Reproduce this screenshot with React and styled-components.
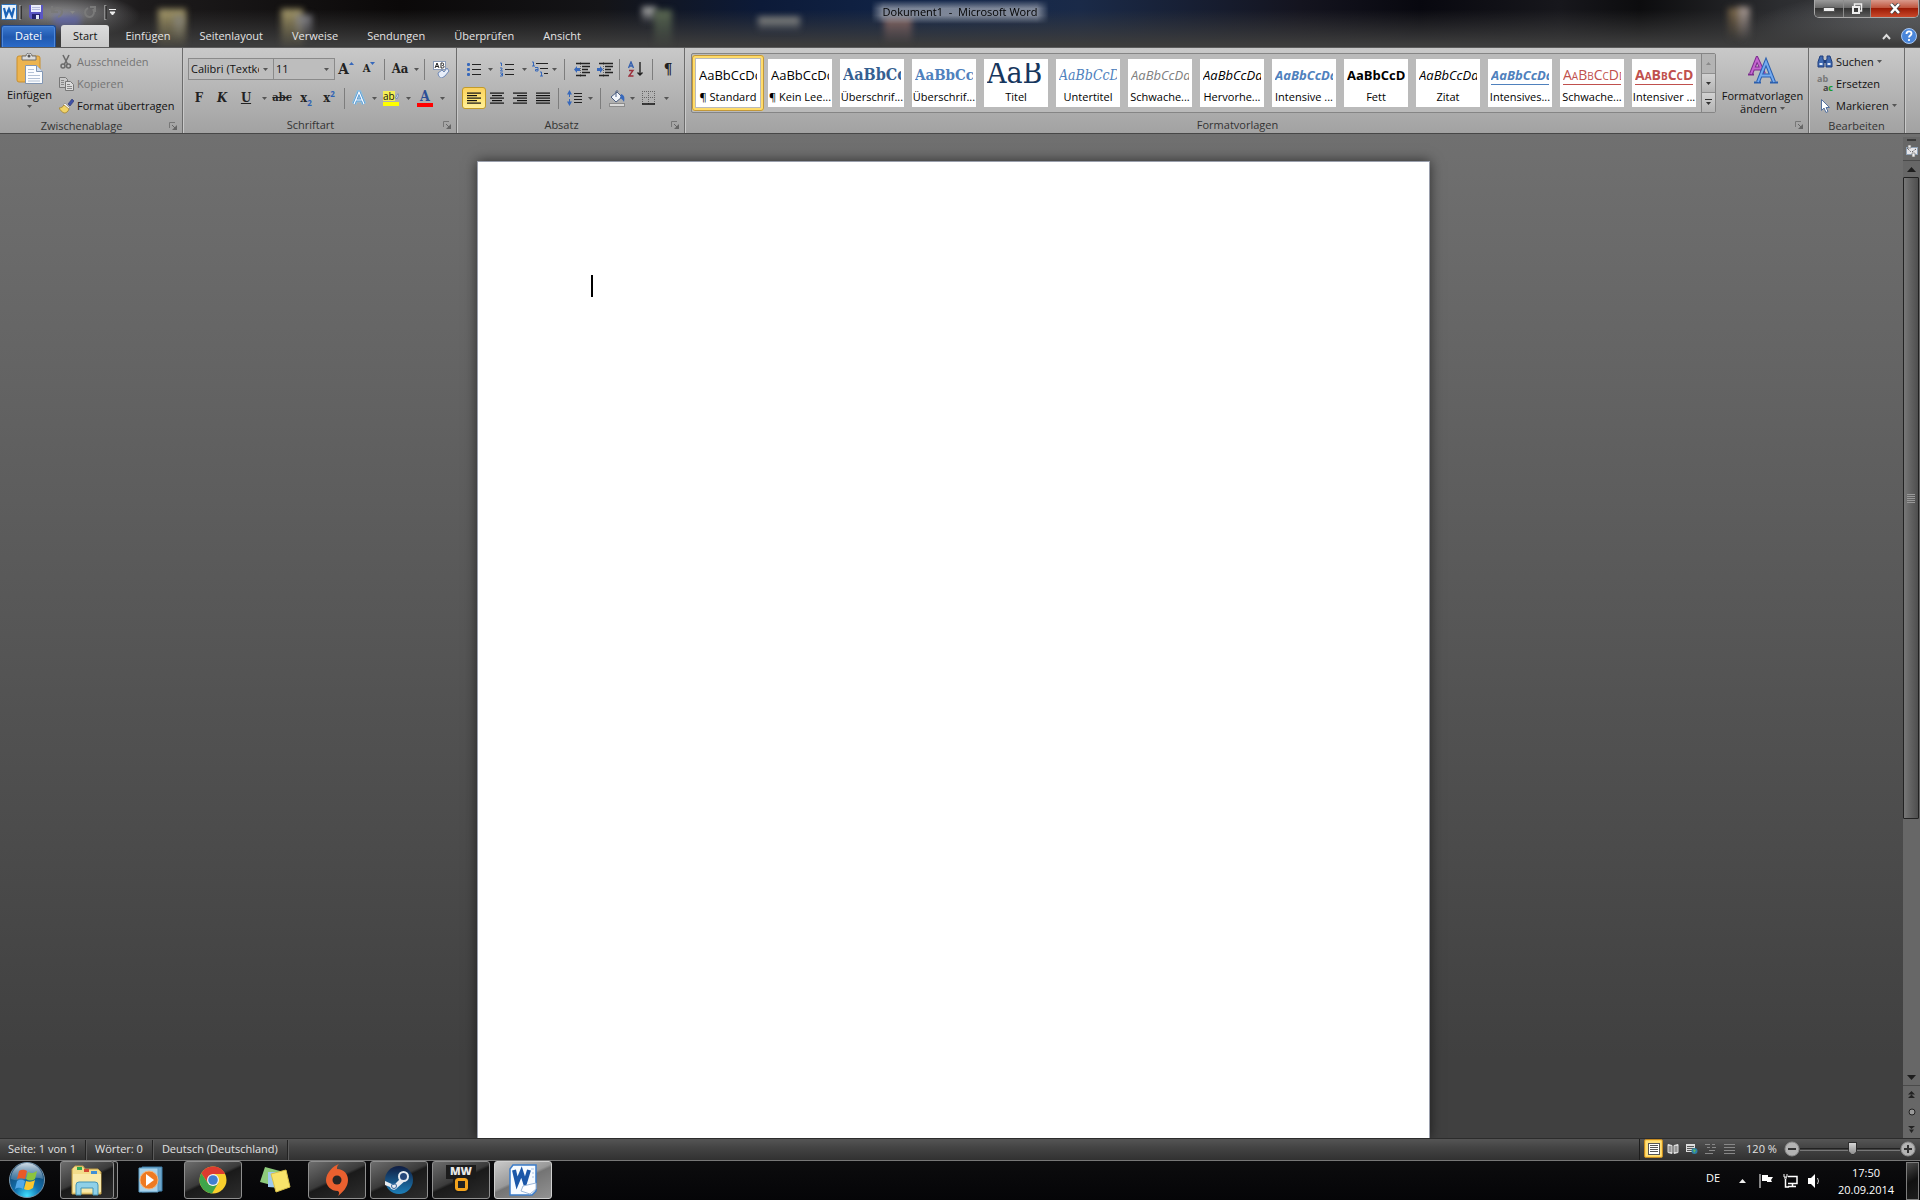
import React from "react";
import styled, { createGlobalStyle, css } from "styled-components";

const GlobalStyle = createGlobalStyle`
  * {
    box-sizing: border-box;
  }

  body {
    margin: 0;
    font-family: "Open Sans", "Noto Sans", sans-serif;
    font-size: 11px;
    line-height: 14px;
    color: #111;
    background: #404040;
  }

  button,
  select {
    font: inherit;
    color: inherit;
    margin: 0;
    padding: 0;
    border: none;
    background: none;
  }
`;

const Window = styled.div`
  display: flex;
  flex-direction: column;
  min-height: 100vh;
`;

/* ---------- title bar ---------- */

const Header = styled.header`
  position: relative;
  isolation: isolate;
  height: 48px;
  border-bottom: 1px solid #5c5c5c;
  overflow: hidden;
  background:
    linear-gradient(to bottom, rgba(60, 60, 60, 0) 20%, #3c3c3c 94%),
    radial-gradient(ellipse 80px 24px at 60px 16px, #98989a, transparent),
    radial-gradient(ellipse 160px 50px at 1900px 40px, #77797c, transparent),
    linear-gradient(
      to right,
      #4a4a4c 0,
      #1d1b1c 140px,
      #0b0909 400px,
      #141417 600px,
      #0c1a38 760px,
      #12264a 940px,
      #1a2a48 1080px,
      #14141f 1300px,
      #08080f 1420px,
      #17171c 1560px,
      #0c0c0e 1640px,
      #2c2d30 1780px,
      #3c3d40 100%
    );
`;

/* desktop icons showing through the glass */
const Ghost = styled.span`
  position: absolute;
  z-index: -1;
  top: ${(p) => p.$y}px;
  left: ${(p) => p.$x}px;
  width: ${(p) => p.$w}px;
  height: ${(p) => p.$h}px;
  background: linear-gradient(${(p) => p.$color}, transparent);
  filter: blur(3px);
`;

const TitleRow = styled.div`
  display: grid;
  grid-template-columns: 1fr auto 1fr;
  height: 25px;
`;

const QuickAccess = styled.div`
  display: flex;
  align-items: center;
  height: 24px;
  padding-left: 1px;
`;

const QuickButton = styled.button`
  display: flex;
  align-items: center;
  justify-content: center;
  width: ${(p) => p.$w}px;
  height: 20px;
`;

const QuickBar = styled.span`
  width: 3px;
  height: 15px;
  margin: 0 2px;
  border: 1px solid #8d8d8d;
  border-right-color: #333;
`;

const Title = styled.h1`
  height: 24px;
  margin: 0;
  padding: 5px 12px 0;
  font-size: 11px;
  font-weight: 400;
  line-height: 14px;
  white-space: pre;
  color: #000;
  background: linear-gradient(
    to right,
    rgba(160, 166, 178, 0),
    rgba(160, 166, 178, 0.75) 12px,
    rgba(160, 166, 178, 0.75) calc(100% - 12px),
    rgba(160, 166, 178, 0)
  );
  mask-image: linear-gradient(transparent, #000 35%, #000 65%, transparent);
`;

const WindowButtons = styled.div`
  display: flex;
  justify-self: end;
  height: 18px;
  margin-right: 1px;
  border: 1px solid #a9a9a9;
  border-top: none;
  border-radius: 0 0 5px 5px;
  overflow: hidden;
`;

const WindowButton = styled.button`
  display: flex;
  align-items: center;
  justify-content: center;
  width: ${(p) => p.$w}px;
  border-right: 1px solid #8c8c8c;
  background: linear-gradient(#9a9a9a, #6a6a6a 45%, #333 50%, #5c5c5c);

  ${(p) =>
    p.$close &&
    css`
      border-right: none;
      background: linear-gradient(#d99a8c, #c0563f 45%, #9c1c06 50%, #c9482a);
    `}
`;

const TabRow = styled.nav`
  display: flex;
  gap: 1px;
  height: 23px;
  padding-left: 1px;
  color: #e4e4e4;
`;

const FileTab = styled.button`
  width: 55px;
  margin-right: 4px;
  padding-bottom: 2px;
  color: #fff;
  border: 1px solid #1d4a93;
  border-bottom: none;
  border-radius: 3px 3px 0 0;
  background: linear-gradient(#3d7bd0, #2059b0 50%, #2b6ccb);
  box-shadow: inset 0 0 0 1px #4f88d8;
`;

const Tab = styled.button`
  padding: 0 14px 2px;
  white-space: nowrap;

  ${(p) =>
    p.$active &&
    css`
      margin-right: 1px;
      padding: 0 12px 2px;
      color: #111;
      border-radius: 3px 3px 0 0;
      background: linear-gradient(#dcdcdc, #c8c8c8);
    `}
`;

const TabTools = styled.div`
  display: flex;
  align-items: center;
  gap: 10px;
  margin-left: auto;
  padding: 0 3px 2px 0;
`;

/* ---------- ribbon ---------- */

const Ribbon = styled.div`
  display: flex;
  height: 86px;
  border-bottom: 1px solid #474747;
  background: linear-gradient(#c9c9c9, #b9b9b9 40%, #a2a2a2);
`;

const Group = styled.section`
  display: flex;
  flex-direction: column;
  flex: ${(p) => (p.$grow ? "1 1 0" : "none")};
  min-width: 0;
  width: ${(p) => (p.$w ? `${p.$w}px` : "auto")};
  border-right: 1px solid #c9c9c9;
  box-shadow: inset -1px 0 0 #6c6c6c;
`;

const GroupBody = styled.div`
  display: flex;
  flex: 1;
  min-width: 0;
  padding: ${(p) => p.$pad || "0"};
`;

const GroupFooter = styled.div`
  display: flex;
  align-items: center;
  height: 17px;
  padding-right: 6px;
  color: #333;
`;

const GroupLabel = styled.h2`
  flex: 1;
  margin: 0;
  padding: ${(p) => (p.$launcher ? "0 6px 0 0" : "0 0 0 4px")};
  font-size: 11px;
  font-weight: 400;
  text-align: center;
`;

const BigButton = styled.button`
  display: flex;
  flex-direction: column;
  align-items: center;
  width: ${(p) => p.$w}px;
  line-height: 13px;
`;

const BigIcon = styled.span`
  display: flex;
  align-items: center;
  height: 34px;
  margin-bottom: 2px;
`;

const Stack = styled.div`
  display: flex;
  flex-direction: column;
`;

const RowButton = styled.button`
  display: flex;
  align-items: center;
  gap: 3px;
  height: 22px;
  padding-bottom: 3px;
  white-space: nowrap;
  color: ${(p) => (p.disabled ? "#757575" : "#111")};
`;

const Tools = styled.div`
  display: flex;
  flex-direction: column;
  gap: 7px;
`;

const ToolRow = styled.div`
  display: flex;
  align-items: center;
  height: 22px;
`;

const Tool = styled.button`
  display: flex;
  align-items: center;
  justify-content: center;
  width: ${(p) => p.$w}px;
  height: 22px;

  ${(p) =>
    p.$active &&
    css`
      border: 1px solid #c29b29;
      border-radius: 3px;
      background: linear-gradient(#fcd25f, #ffe67a 60%, #fff09c);
    `}
`;

const Separator = styled.span`
  width: ${(p) => p.$w}px;
  height: 21px;
  background: linear-gradient(#7d7d7d, #7d7d7d) center / 1px 100% no-repeat;
`;

const Letter = styled.span`
  font-family: "DejaVu Serif Condensed", "Liberation Serif", serif;
  font-size: ${(p) => p.$size || 13}px;
  font-weight: 700;
  font-style: ${(p) => (p.$italic ? "italic" : "normal")};
  text-decoration: ${(p) => p.$line || "none"};
  color: #222;

  sub,
  sup {
    font-family: "Open Sans", sans-serif;
    font-size: 8px;
    line-height: 0;
    color: #2f62b5;
  }
`;

const Combo = styled.label`
  display: flex;
  align-items: center;
  width: ${(p) => p.$w}px;
  height: 22px;
  margin-right: -1px;
  padding: 0 5px 0 2px;
  border: 1px solid #8a8a8a;
  background: #bdbdbd;

  select {
    flex: 1;
    min-width: 0;
    margin-right: 4px;
    appearance: none;
    outline: none;
    white-space: nowrap;
    overflow: hidden;
    text-overflow: clip;
  }
`;

/* ---------- style gallery ---------- */

const Gallery = styled.div`
  display: flex;
  flex: 1;
  min-width: 0;
  height: 60px;
  border: 1px solid #858585;
  border-radius: 2px;
  background: #bababa;
`;

const GalleryItems = styled.div`
  display: flex;
  flex: 1;
  min-width: 0;
  overflow: hidden;
`;

const StyleCard = styled.button`
  flex: none;
  width: 72px;
  height: 56px;
  margin-top: 1px;
  padding: 1px;
  border: 3px solid transparent;
  border-radius: 3px;
  background: #fff content-box;

  ${(p) =>
    p.$active &&
    css`
      border-color: #ffdc6b;
      outline: 1px solid #c2983a;
      outline-offset: -1px;
    `}
`;

const Sample = styled.span`
  display: block;
  height: 24px;
  margin: 2px 3px 0;
  overflow: hidden;
  text-align: left;
  white-space: nowrap;
  font-family: ${(p) =>
    p.$serif
      ? '"DejaVu Serif Condensed", "Liberation Serif", serif'
      : '"Open Sans", sans-serif'};
  font-size: ${(p) => p.$size || 13}px;
  font-weight: ${(p) => (p.$bold ? 700 : 400)};
  font-style: ${(p) => (p.$italic ? "italic" : "normal")};
  font-variant: ${(p) => (p.$caps ? "small-caps" : "normal")};
  line-height: ${(p) => p.$leading || 24}px;
  color: ${(p) => p.$color || "#000"};

  span {
    display: inline-block;
    line-height: 18px;
    border-bottom: ${(p) => (p.$underline ? `1px solid ${p.$color}` : "none")};
  }
`;

const StyleName = styled.span`
  display: block;
  line-height: 19px;
  text-align: center;
  white-space: nowrap;
  color: #000;
`;

const GalleryScroll = styled.div`
  display: flex;
  flex-direction: column;
  width: 14px;

  button {
    display: flex;
    flex: 1;
    align-items: center;
    justify-content: center;
    border-left: 1px solid #858585;
    border-top: 1px solid #8f8f8f;
    background: linear-gradient(#d2d2d2, #b4b4b4);
  }

  button:first-child {
    border-top: none;
    background: #b4b4b4;
  }
`;

/* ---------- document ---------- */

const Workspace = styled.main`
  display: flex;
  flex: 1;
  min-height: 400px;
  background: linear-gradient(#707070, #404040 92%);
`;

const Canvas = styled.div`
  display: flex;
  flex: 1;
  justify-content: center;
  padding: 27px 0 0 4px;
  overflow: hidden;
`;

const Page = styled.article`
  width: 953px;
  padding: 113px;
  border: 1px solid #9a9fac;
  border-bottom: none;
  background: #fff;
  box-shadow: 0 0 12px rgba(0, 0, 0, 0.6);
`;

const Caret = styled.span`
  display: block;
  width: 2px;
  height: 22px;
  background: #000;
`;

const ScrollColumn = styled.div`
  display: flex;
  flex-direction: column;
  width: 17px;
  margin-top: 3px;
  background: #676767;
`;

const SplitBar = styled.div`
  width: 9px;
  height: 2px;
  margin: 2px auto 0;
  background: #3a3a3a;
`;

const ScrollButton = styled.button`
  display: flex;
  align-items: center;
  justify-content: center;
  height: ${(p) => p.$h}px;
  border-bottom: ${(p) => (p.$line ? "1px solid #4a4a4a" : "none")};
`;

const ScrollTrack = styled.div`
  display: flex;
  flex-direction: column;
  flex: 1;
`;

const ScrollThumb = styled.div`
  display: flex;
  align-items: center;
  justify-content: center;
  height: 72%;
  margin-right: 1px;
  border: 1px solid #222;
  border-radius: 1px;
  background: linear-gradient(to right, #787878, #616161 50%, #4e4e4e);
`;

/* ---------- status bar ---------- */

const StatusBar = styled.footer`
  display: flex;
  align-items: center;
  height: 22px;
  border-top: 1px solid #2c2c2c;
  color: #e2e2e2;
  background: linear-gradient(#555, #444 40%, #313131);
`;

const StatusItem = styled.span`
  padding: 0 9px 2px 8px;
  line-height: 18px;
  border-right: 1px solid #222;
  box-shadow: 1px 0 0 #5b5b5b;

  & + & {
    padding-left: 9px;
  }
`;

const StatusTools = styled.div`
  display: flex;
  align-items: center;
  height: 21px;
  margin-left: auto;
  padding: 0 4px 2px;
  border-left: 1px solid #1d1d1d;
`;

const ViewButton = styled.button`
  display: flex;
  align-items: center;
  justify-content: center;
  width: 19px;
  height: 19px;

  ${(p) =>
    p.$active &&
    css`
      border: 1px solid #c48a22;
      border-radius: 2px;
      background: #ffe07a;
      box-shadow: inset 0 0 0 1px #ffd257;
    `}
`;

const ZoomValue = styled.button`
  width: 45px;
  text-align: center;
`;

const RoundButton = styled.button`
  display: flex;
  width: 16px;
  height: 16px;
`;

const ZoomSlider = styled.input`
  width: 100px;
  height: 16px;
  margin: 0;
  appearance: none;
  background: linear-gradient(#222, #222) center / 100% 1px no-repeat,
    linear-gradient(#777, #777) 0 9px / 100% 1px no-repeat;

  &::-webkit-slider-thumb {
    appearance: none;
    width: 9px;
    height: 13px;
    border: 1px solid #2b2b2b;
    background: linear-gradient(#d6d6d6, #8d8d8d);
    clip-path: polygon(0 0, 100% 0, 100% 65%, 50% 100%, 0 65%);
  }
`;

/* ---------- task bar ---------- */

const TaskBar = styled.nav`
  display: flex;
  height: 40px;
  border-top: 1px solid #777;
  background: linear-gradient(#0c0c0e, #050507);
  color: #fff;
`;

const StartButton = styled.button`
  width: 60px;
  padding-right: 6px;
`;

const TaskSlot = styled.div`
  width: 62px;
`;

const TaskButton = styled.button`
  display: flex;
  align-items: center;
  justify-content: center;
  width: ${(p) => p.$w || 58}px;
  height: 38px;
  border: 1px solid transparent;
  border-radius: 3px;

  ${(p) =>
    p.$open &&
    css`
      border-color: #8f8f8f;
      background: linear-gradient(155deg, #6d6d6d, #3b3b3b 45%, #1a1a1a 50%, #2d2d2d);
    `}

  ${(p) =>
    p.$stacked &&
    css`
      box-shadow: 4px 0 0 -1px #1c1c1c, 4px 0 0 0 #8f8f8f;
    `}

  ${(p) =>
    p.$current &&
    css`
      border-color: #d0d0d0;
      background: linear-gradient(155deg, #c9c9c9, #999 45%, #747474 50%, #929292);
    `}
`;

const Tray = styled.div`
  display: flex;
  align-items: center;
  margin-left: auto;
`;

const TrayButton = styled.button`
  display: flex;
  align-items: center;
  justify-content: center;
  width: 24px;
  height: 38px;
`;

const Language = styled.button`
  height: 34px;
  align-self: flex-start;
  margin-right: 10px;
`;

const Clock = styled.button`
  width: 80px;
  line-height: 17px;
  text-align: center;
`;

const ShowDesktop = styled.button`
  width: 13px;
  height: 38px;
  margin-right: 1px;
  border: 1px solid #7d7d7d;
  background: linear-gradient(150deg, #4a4a4a, #111 50%, #1d1d1d);
`;

/* ---------- icons ---------- */

const Svg = ({ w = 16, h = 16, children }) => (
  <svg width={w} height={h} viewBox={`0 0 ${w} ${h}`} fill="none" aria-hidden="true">
    {children}
  </svg>
);

const Down = ({ color = "#555" }) => (
  <Svg w={5} h={3}>
    <path d="M0 0h5L2.500 3z" fill={color} />
  </Svg>
);

const WordMark = () => (
  <Svg>
    <rect x=".5" y=".5" width="15" height="15" rx="1" fill="#e9f2fc" stroke="#2a72bd" />
    <path d="M3 4l2 8 3-7 3 7 2-8" stroke="#1b63b8" strokeWidth="2.200" />
  </Svg>
);

const SaveIcon = () => (
  <Svg w={14} h={14}>
    <path d="M0 0h14v14H2l-2-2z" fill="#5a56c4" />
    <rect x="2" width="10" height="7" fill="#e9ecfa" />
    <path d="M3 2.500h8M3 4.500h8" stroke="#b6bcdd" />
    <rect x="3" y="9" width="8" height="5" fill="#24226e" />
    <rect x="7" y="10" width="3" height="4" fill="#dfe3f5" />
  </Svg>
);

const UndoIcon = () => (
  <Svg w={14} h={14}>
    <path d="M2 1v6h6" stroke="#7a7a7a" strokeWidth="2" />
    <path d="M3 6c2-4 9-4 9 1 0 3-2 4-4 5" stroke="#7a7a7a" strokeWidth="2" />
  </Svg>
);

const RedoIcon = () => (
  <Svg w={14} h={14}>
    <path d="M5 3C0 6 2 12 7 12c4-1 5-5 3-8M7 2h5v5" stroke="#7a7a7a" strokeWidth="2" />
  </Svg>
);

const LauncherIcon = () => (
  <Svg w={8} h={8}>
    <path d="M.5 6V.5H6" stroke="#777" />
    <path d="M3 3l4 4" stroke="#666" />
    <path d="M8 3v5H3z" fill="#666" />
  </Svg>
);

const PasteIcon = () => (
  <Svg w={28} h={32}>
    <rect x="1" y="3" width="23" height="26" rx="2" fill="#ecb450" stroke="#c98f2e" />
    <path d="M6 7V3h4c0-4 6-4 6 0h4v4z" fill="#dcdcdc" stroke="#707070" />
    <circle cx="13" cy="3" r="1.500" fill="#555" />
    <path d="M9.500 12.500h11l6 6v12h-17z" fill="#fbfdff" stroke="#8297b4" />
    <path d="M20.500 12.500v6h6" fill="#d3e0f0" stroke="#8297b4" />
    <path d="M12 16.500h6M12 19.500h6M12 22.500h12M12 25.500h12M12 28h12" stroke="#b4c2d6" />
  </Svg>
);

const CutIcon = () => (
  <Svg w={15}>
    <path d="M4 1l4.500 9M10 1L5.500 10" stroke="#6b6b6b" strokeWidth="1.600" />
    <circle cx="4" cy="12" r="2" stroke="#6b6b6b" strokeWidth="1.500" />
    <circle cx="9.500" cy="12" r="2" stroke="#6b6b6b" strokeWidth="1.500" />
  </Svg>
);

const CopyIcon = () => (
  <Svg w={15}>
    <path d="M.5 1.500h6l2 2v8h-8z" fill="#c9c9c9" stroke="#777" />
    <path d="M6.500 5.500h5l3 3v6h-8z" fill="#dcdcdc" stroke="#777" />
    <path d="M2 4.500h3M2 6.500h3M2 8.500h3M8 8.500h3M8 10.500h5M8 12.500h5" stroke="#888" />
  </Svg>
);

const BrushIcon = () => (
  <Svg w={15}>
    <path d="M9 6l4-5 2 2-4 5z" fill="#3f51a8" stroke="#28346f" strokeWidth=".6" />
    <path d="M6 5l5 5-2 2-5-5z" fill="#f4f4f4" stroke="#888" strokeWidth=".7" />
    <path d="M5 7l5 4c-1 3-3 4-5 4-2-1-4-3-5-5 2 0 4-1 5-3z" fill="#f1d468" stroke="#9d7a22" strokeWidth=".7" />
  </Svg>
);

const ClearIcon = () => (
  <Svg w={17} h={17}>
    <rect x=".5" y=".5" width="12" height="8" fill="#fff" stroke="#8a9ab5" />
    <path d="M2 7l2-5 2 5M3 5.500h2M8 2v5h1.500c2 0 2-2.500 0-2.500 1.500 0 1.500-2.500 0-2.500z" stroke="#222" />
    <path d="M5 12l4-3 2 2 3-4 2 3-4 5-3 2c-2 0-4-2-4-5z" fill="#e7eefa" stroke="#6f88b5" />
  </Svg>
);

const GlowLetterIcon = () => (
  <Svg>
    <path d="M3 14L8 2l5 12M5 10h6" stroke="#7cc4f2" strokeWidth="5" strokeLinejoin="round" opacity=".6" />
    <path d="M3 14L8 2l5 12M5 10h6" stroke="#4d94d6" strokeWidth="2.500" strokeLinejoin="round" />
    <path d="M3 14L8 2l5 12M5 10h6" stroke="#fff" strokeWidth="1.200" />
  </Svg>
);

const MarkerBox = styled.span`
  display: flex;
  align-items: center;
  width: 16px;
  height: 16px;
  border-bottom: 4px solid #ff0;
  font-size: 10px;
  line-height: 10px;

  span {
    background: #f4ee56;
  }
`;

const FontColor = styled.span`
  width: 16px;
  height: 17px;
  border-bottom: 4px solid #f00;
  font-family: "DejaVu Serif Condensed", "Liberation Serif", serif;
  font-size: 14px;
  font-weight: 700;
  line-height: 12px;
  text-align: center;
  color: #2b4e96;
`;

const ListIcon = ({ kind }) => (
  <Svg w={14} h={15}>
    <path d="M5 2.500h9M5 7.500h9M5 12.500h9" stroke="#222" />
    {kind === "bullets" ? (
      <g fill="#3768bb">
        <rect y="1" width="3" height="3" rx="1" />
        <rect y="6" width="3" height="3" rx="1" />
        <rect y="11" width="3" height="3" rx="1" />
      </g>
    ) : (
      <path d="M0 1h1.500v3M0 6h2v1L.5 9H3M0 11h2.500v3H0M1 12.500h1" stroke="#3768bb" />
    )}
  </Svg>
);

const MultiListIcon = () => (
  <Svg w={17}>
    <path d="M5 2.500h12M9 7.500h8M13 12.500h4" stroke="#222" />
    <path d="M1 1h1.500v4M1 5h3M4 6.500h3V10H4.500V8.500H7M9 11h1.500v4M9 15h3" stroke="#3768bb" />
  </Svg>
);

const IndentIcon = ({ right }) => (
  <Svg w={16} h={15}>
    <path d="M2 1.500h14M8 4.500h8M8 7.500h6M8 10.500h8M2 13.500h10" stroke="#222" strokeWidth="1.500" />
    <path d="M6.500 0v15" stroke="#666" strokeDasharray="1 1" />
    <path d={right ? "M0 6h3V4l3 3.500L3 11V9H0z" : "M6 6H3V4L0 7.500 3 11V9h3z"} fill="#3768bb" />
  </Svg>
);

const SortIcon = () => (
  <Svg w={15}>
    <path d="M.5 7L3 1l2.500 6M1.500 5h3" stroke="#3560ae" strokeWidth="1.400" />
    <path d="M1 9.500h4L1 15h4.500" stroke="#9b2f3b" strokeWidth="1.400" />
    <path d="M12 1v13M9.500 11.500L12 14l2.500-2.500" stroke="#222" strokeWidth="1.400" />
  </Svg>
);

const alignRows = {
  left: [[0, 14], [0, 10], [0, 14], [0, 10], [0, 14]],
  center: [[0, 14], [2, 10], [0, 14], [2, 10], [0, 14]],
  right: [[0, 14], [4, 10], [0, 14], [4, 10], [0, 14]],
  justify: [[0, 14], [0, 14], [0, 14], [0, 14], [0, 14]],
};

const AlignIcon = ({ kind }) => (
  <Svg w={14} h={12}>
    {alignRows[kind].map(([x, w], i) => (
      <rect key={i} x={x} y={i * 2.5 + 0.5} width={w} height="1.200" fill="#111" />
    ))}
  </Svg>
);

const SpacingIcon = () => (
  <Svg w={15}>
    <path d="M2.500 2v12" stroke="#3768bb" strokeDasharray="5 2" />
    <path d="M0 4.500L2.500 0 5 4.500zM0 11.500L2.500 16 5 11.500z" fill="#3768bb" />
    <path d="M7 3.500h8M7 6.500h8M7 9.500h8M7 12.500h8" stroke="#222" />
  </Svg>
);

const BucketIcon = () => (
  <Svg w={17} h={17}>
    <path d="M2 7l6-5 5 5-6 5z" fill="#f3f6fb" stroke="#4a5d80" />
    <path d="M7 7V1.500c0-1 2-1 2 0" stroke="#4a5d80" />
    <path d="M12 4c3 1 4 3 3 8-1-2-2-3-4-4z" fill="#3768bb" />
    <rect x=".5" y="13.500" width="15" height="3" fill="#d9d9d9" stroke="#8c8c8c" />
  </Svg>
);

const BordersIcon = () => (
  <Svg w={14} h={14}>
    <path d="M.5 0v13M6.500 0v13M12.500 0v13M0 .5h13M0 6.500h13" stroke="#666" strokeDasharray="1 1" />
    <path d="M0 13h13" stroke="#111" strokeWidth="1.500" />
  </Svg>
);

const ChangeStylesIcon = () => (
  <Svg w={30} h={28}>
    <path d="M3 18L9 3l7 15M5 12.500h8" stroke="#7c2c8e" strokeWidth="4" />
    <path d="M0 18.500h6" stroke="#7c2c8e" strokeWidth="2" />
    <path d="M3 18L9 3l7 15M5 12.500h8" stroke="#c466cf" strokeWidth="2" />
    <path d="M10 26l8-20 8 20M12 19.500h11" stroke="#2a5fae" strokeWidth="4" />
    <path d="M6 26.500h7M22 26.500h8" stroke="#2a5fae" strokeWidth="2" />
    <path d="M10 26l8-20 8 20M12 19.500h11" stroke="#74aaf0" strokeWidth="2" />
  </Svg>
);

const BinocularsIcon = () => (
  <Svg>
    <path d="M3 2h3v3l1 2v6H1V8zM10 2h3l2 6v5H9V7l1-2z" fill="#3e68b0" stroke="#203f7c" />
    <path d="M7 6h2v3H7z" fill="#203f7c" />
    <path d="M2.500 9h3v2h-3zM10.500 9h3v2h-3z" fill="#dfe9f8" />
  </Svg>
);

const ReplaceBox = styled.span`
  width: 16px;
  height: 20px;
  font-size: 9px;
  font-weight: 700;
  line-height: 9px;
  text-align: left;
  color: #777;

  span {
    display: block;
    text-align: right;
    color: #444;
  }

  em {
    font-style: normal;
    color: #159a2c;
  }
`;

const PointerIcon = () => (
  <Svg>
    <path d="M4.500 1.500v11l2.500-2.500 2 4.500 2-1-2-4h3.500z" fill="#fff" stroke="#54719f" />
  </Svg>
);

const HelpIcon = () => (
  <Svg>
    <circle cx="8" cy="8" r="7.500" fill="#4a86da" stroke="#a9c8f2" />
    <path d="M5.500 6c0-3.500 5-3.500 5-.5C10.500 7.500 8 7.500 8 9.500M8 11v2" stroke="#fff" strokeWidth="1.800" />
  </Svg>
);

const DoubleArrow = ({ down }) => (
  <Svg w={7} h={7}>
    <path
      d={down ? "M0 0h7L3.500 3zM1 3.500h5L3.500 7z" : "M0 3.500h7L3.500 0zM0 7h7L3.500 3.500z"}
      fill="#222"
    />
  </Svg>
);

const RoundIcon = ({ plus }) => (
  <Svg>
    <circle cx="8" cy="8" r="7" fill="#b3b3b3" stroke="#8a8a8a" />
    <path d={plus ? "M4 8h8M8 4v8" : "M4 8h8"} stroke="#333" strokeWidth="2" />
  </Svg>
);

const BookIcon = () => (
  <Svg w={12} h={12}>
    <path d="M1 1.500l4 1v8l-4-1zM11 1.500l-4 1v8l4-1z" fill="#ddd" stroke="#ddd" />
    <path d="M1.500 4h3M1.500 6h3M1.500 8h3M7.500 4h3M7.500 6h3M7.500 8h3" stroke="#555" />
  </Svg>
);

const WebIcon = () => (
  <Svg w={12} h={12}>
    <path d="M0 1h9v8H0z" fill="#ddd" />
    <path d="M1 3.500h7M1 5.500h7M1 7.500h5" stroke="#555" />
    <circle cx="8.500" cy="8" r="3" fill="#2d7fa8" />
    <path d="M7 6l3 1-2 3z" fill="#5fb85a" />
  </Svg>
);

const OutlineIcon = () => (
  <Svg w={11} h={12}>
    <path d="M0 1.500h5M7 1.500h3M2 4.500h3M7 4.500h4M4 7.500h6M0 10.500h8" stroke="#888" />
  </Svg>
);

const DraftIcon = () => (
  <Svg w={11} h={12}>
    <path d="M0 1.500h11M0 4.500h11M0 7.500h11M0 10.500h11" stroke="#888" />
  </Svg>
);

const PageIcon = () => (
  <Svg w={12} h={12}>
    <rect x=".5" y=".5" width="11" height="11" fill="#fff" stroke="#555" />
    <path d="M2 2.500h8M2 4.500h8M2 6.500h8M2 8.500h8" stroke="#555" />
  </Svg>
);

const RulerIcon = () => (
  <Svg w={13} h={12}>
    <rect x="1.500" y="2.500" width="11" height="7" fill="#e6e6ea" stroke="#8ea0b4" />
    <path d="M3 0h3v3H3zM7 8h3v4H7z" fill="#eee" stroke="#777" strokeWidth=".7" />
    <path d="M2 3l4 4M7 7l4-3" stroke="#333" strokeDasharray="1 1" />
  </Svg>
);

const StartOrb = () => (
  <Svg w={38} h={38}>
    <defs>
      <radialGradient id="orb" cx=".5" cy=".95" r=".9">
        <stop offset="0" stopColor="#3fe0ff" />
        <stop offset=".4" stopColor="#1272b0" />
        <stop offset="1" stopColor="#123a5f" />
      </radialGradient>
      <linearGradient id="shine" x2="0" y2="1">
        <stop offset="0" stopColor="#e8f1f8" stopOpacity=".9" />
        <stop offset="1" stopColor="#8db4d0" stopOpacity=".3" />
      </linearGradient>
    </defs>
    <circle cx="19" cy="19" r="17.500" fill="url(#orb)" stroke="#7896ad" />
    <path d="M3 18a16 16 0 0 1 32 0c-10-4-22 4-32 0z" fill="url(#shine)" />
    <path d="M11 10c3-2 6-1 8 0l-2 8c-3-1-6-1-8 0z" fill="#ea5a26" />
    <path d="M20 11c3 2 6 1 9-1l-2 8c-3 2-6 2-9 0z" fill="#8cc43f" />
    <path d="M9 20c3-2 6-1 8 0l-2 8c-3-2-6-1-8 0z" fill="#52a8e8" />
    <path d="M18 20c3 1 6 1 9-1l-2 8c-3 2-6 3-9 1z" fill="#fcc72e" />
  </Svg>
);

const ExplorerIcon = () => (
  <Svg w={32} h={32}>
    <path d="M1 30V5l3-3h8l2 3h13l3 3v22z" fill="#f3dc8a" stroke="#bf9b45" />
    <path d="M6 3h5v3H6z" fill="#2fa84a" />
    <path d="M13 5h5v3h-5z" fill="#d24a33" />
    <path d="M20 7h6v3h-6z" fill="#3f8ed6" />
    <path d="M2 10h28v18H2z" fill="#f9e9a9" />
    <path d="M5 31V21q0-3 3-3h16q3 0 3 3v10h-5v-7H10v7z" fill="#8fd0e8" stroke="#4593b4" />
  </Svg>
);

const PlayerIcon = () => (
  <Svg w={26} h={28}>
    <path d="M4 1h20v24l-20 1z" fill="#6ea7cc" stroke="#3c7ba6" />
    <path d="M1 2h19v24H1z" fill="#a9d2ea" stroke="#5d9cc4" />
    <circle cx="11" cy="14" r="9" fill="#ee7a22" stroke="#f7b477" />
    <path d="M8 8l8 6-8 6z" fill="#fff" />
  </Svg>
);

const ChromeIcon = () => (
  <Svg w={28} h={28}>
    <circle cx="14" cy="14" r="13.500" fill="#f8cf2c" />
    <path d="M14 8h12.200A13.500 13.500 0 0 0 2.300 7.300L8.800 17z" fill="#dd3b2f" />
    <path d="M2.300 7.300A13.500 13.500 0 0 0 13 27.500L19.200 17 14 20 8.800 17z" fill="#3fa54b" />
    <circle cx="14" cy="14" r="6" fill="#f5f5f5" />
    <circle cx="14" cy="14" r="4.800" fill="#3f7fd0" />
  </Svg>
);

const NotesIcon = () => (
  <Svg w={32} h={28}>
    <path d="M6 1l15 4-5 15L1 16z" fill="#8ecb7c" />
    <path d="M9 6h14v16l-14-1z" fill="#9dc9ee" />
    <path d="M12 8l15-4 4 17-14 5z" fill="#f8e36b" stroke="#d9c04a" />
  </Svg>
);

const OriginIcon = () => (
  <Svg w={24} h={32}>
    <path
      d="M14 0c-2 2-2 3-2 5 7 0 11 5 11 11 0 7-5 12-10 16 2-3 1-4 0-5C6 27 1 22 1 16 1 9 8 2 14 0z"
      fill="#e9602f"
    />
    <circle cx="12" cy="16" r="4.500" fill="#252525" />
  </Svg>
);

const SteamIcon = () => (
  <Svg w={30} h={30}>
    <defs>
      <linearGradient id="steam" x2="0" y2="1">
        <stop offset="0" stopColor="#101d42" />
        <stop offset="1" stopColor="#1c7fb8" />
      </linearGradient>
    </defs>
    <circle cx="15" cy="15" r="14" fill="url(#steam)" />
    <path d="M1 16l9 4 8-8 4 3-9 8c-2 3-6 2-7-1l-5-2z" fill="#e7ebf0" />
    <circle cx="19.500" cy="11.500" r="4.500" fill="#26477a" stroke="#e7ebf0" strokeWidth="2" />
    <circle cx="10" cy="21" r="2.500" stroke="#31649a" />
  </Svg>
);

const MwBox = styled.span`
  display: flex;
  flex-direction: column;
  align-items: center;
  width: 30px;
  height: 30px;
  font-size: 11px;
  font-weight: 800;
  line-height: 12px;
  color: #e8e8e8;
  background: linear-gradient(#1b1b1b, #1b1b1b) top / 30px 14px no-repeat;

  i {
    width: 13px;
    height: 13px;
    margin-top: 1px;
    border: 3px solid #f3a31d;
    border-radius: 3px;
    background: #222;
    outline: 2px solid #1b1b1b;
  }
`;

const WordIcon = () => (
  <Svg w={30} h={32}>
    <path d="M5 1h23v26l-4 4H2V5z" fill="#f7fbff" stroke="#3b7cc9" strokeWidth="1.500" />
    <path d="M23 5h3M24 9h2M24 13h2" stroke="#a9c3e3" />
    <path d="M6 6l3 13 4.500-11L17 19l4-13" stroke="#1b57a8" strokeWidth="4" />
    <path d="M15 22l13-3v6l-6 5-9-3z" fill="#fff" stroke="#9db7d8" />
  </Svg>
);

/* ---------- data ---------- */

const tabs = ["Einfügen", "Seitenlayout", "Verweise", "Sendungen", "Überprüfen", "Ansicht"];

const ghosts = [
  { x: 54, y: 16, w: 26, h: 16, color: "#5b62b0" },
  { x: 158, y: 9, w: 28, h: 40, color: "#a89c6c" },
  { x: 174, y: 16, w: 10, h: 24, color: "#84827a" },
  { x: 281, y: 9, w: 22, h: 40, color: "#a89c6c" },
  { x: 296, y: 15, w: 16, h: 26, color: "#84848a" },
  { x: 642, y: 7, w: 14, h: 16, color: "#c4c4c0" },
  { x: 654, y: 10, w: 18, h: 38, color: "#5e6c54" },
  { x: 758, y: 17, w: 42, h: 14, color: "#9a988f" },
  { x: 884, y: 16, w: 28, h: 28, color: "#8c6a62" },
  { x: 1728, y: 8, w: 14, h: 32, color: "#7c684a" },
  { x: 1738, y: 7, w: 12, h: 34, color: "#a89a94" },
];

const styles = [
  { name: "¶ Standard", active: true },
  { name: "¶ Kein Lee..." },
  { name: "Überschrif...", serif: true, bold: true, size: 16, color: "#365f91" },
  { name: "Überschrif...", serif: true, bold: true, size: 15, color: "#4f81bd", text: "AaBbCc" },
  { name: "Titel", serif: true, size: 30, leading: 19, color: "#17365d", text: "AaB" },
  { name: "Untertitel", serif: true, italic: true, size: 14, color: "#4f81bd" },
  { name: "Schwache...", italic: true, color: "#808080" },
  { name: "Hervorhe...", italic: true },
  { name: "Intensive ...", italic: true, bold: true, color: "#4f81bd" },
  { name: "Fett", bold: true },
  { name: "Zitat", italic: true },
  { name: "Intensives...", italic: true, bold: true, underline: true, color: "#4f81bd" },
  { name: "Schwache...", caps: true, underline: true, size: 14, color: "#c0504d" },
  { name: "Intensiver ...", caps: true, bold: true, underline: true, size: 14, color: "#c0504d" },
];

const tasks = [
  { name: "Explorer", icon: <ExplorerIcon />, open: true, stacked: true, w: 54 },
  { name: "Media Player", icon: <PlayerIcon /> },
  { name: "Chrome", icon: <ChromeIcon />, open: true },
  { name: "Kurznotizen", icon: <NotesIcon /> },
  { name: "Origin", icon: <OriginIcon />, open: true },
  { name: "Steam", icon: <SteamIcon />, open: true },
  { name: "MWO", icon: <MwBox>MW<i /></MwBox>, open: true },
  { name: "Word", icon: <WordIcon />, open: true, current: true },
];

/* ---------- parts ---------- */

const Footer = ({ label, launcher }) => (
  <GroupFooter>
    <GroupLabel $launcher={launcher}>{label}</GroupLabel>
    {launcher && (
      <button aria-label={`${label} öffnen`}>
        <LauncherIcon />
      </button>
    )}
  </GroupFooter>
);

const DropTool = ({ w = 8, label }) => (
  <Tool $w={w} aria-label={label}>
    <Down />
  </Tool>
);

const TitleBar = () => (
  <Header>
    {ghosts.map((g) => (
      <Ghost key={g.x} $x={g.x} $y={g.y} $w={g.w} $h={g.h} $color={g.color} />
    ))}
    <TitleRow>
      <QuickAccess>
        <WordMark />
        <QuickBar />
        <QuickButton $w={24} aria-label="Speichern"><SaveIcon /></QuickButton>
        <QuickButton $w={18} aria-label="Rückgängig"><UndoIcon /></QuickButton>
        <QuickButton $w={12} aria-label="Rückgängig-Liste"><Down color="#888" /></QuickButton>
        <QuickButton $w={24} aria-label="Wiederholen"><RedoIcon /></QuickButton>
        <QuickBar />
        <QuickButton $w={7} aria-label="Symbolleiste anpassen">
          <Svg w={7} h={7}>
            <path d="M0 .5h7M1 3h5L3.500 6z" fill="#eee" stroke="#eee" />
          </Svg>
        </QuickButton>
      </QuickAccess>
      <Title>{"Dokument1  -  Microsoft Word"}</Title>
      <WindowButtons>
        <WindowButton $w={29} aria-label="Minimieren">
          <Svg w={12} h={6}><rect x=".5" y="1.500" width="11" height="4" fill="#eee" stroke="#555" /></Svg>
        </WindowButton>
        <WindowButton $w={27} aria-label="Wiederherstellen">
          <Svg w={12} h={12}>
            <path d="M3.500 3V1h7v7H9" stroke="#eee" strokeWidth="1.500" />
            <rect x="2" y="4" width="6" height="6" stroke="#eee" strokeWidth="2" />
          </Svg>
        </WindowButton>
        <WindowButton $w={47} $close aria-label="Schließen">
          <Svg w={12} h={11}>
            <path d="M2 1l8 9M10 1l-8 9" stroke="#444" strokeWidth="4" />
            <path d="M2 1l8 9M10 1l-8 9" stroke="#fff" strokeWidth="2.500" />
          </Svg>
        </WindowButton>
      </WindowButtons>
    </TitleRow>
    <TabRow>
      <FileTab>Datei</FileTab>
      <Tab $active>Start</Tab>
      {tabs.map((tab) => (
        <Tab key={tab}>{tab}</Tab>
      ))}
      <TabTools>
        <button aria-label="Menüband minimieren">
          <Svg w={9} h={7}><path d="M1 6l3.500-4L8 6" stroke="#ddd" strokeWidth="2" /></Svg>
        </button>
        <RoundButton aria-label="Hilfe"><HelpIcon /></RoundButton>
      </TabTools>
    </TabRow>
  </Header>
);

const ClipboardGroup = () => (
  <Group $w={184}>
    <GroupBody $pad="4px 0 0 0">
      <BigButton $w={59}>
        <BigIcon><PasteIcon /></BigIcon>
        Einfügen
        <Svg w={5} h={10}><path d="M0 4h5L2.500 7z" fill="#555" /></Svg>
      </BigButton>
      <Stack>
        <RowButton disabled><CutIcon />Ausschneiden</RowButton>
        <RowButton disabled><CopyIcon />Kopieren</RowButton>
        <RowButton><BrushIcon />Format übertragen</RowButton>
      </Stack>
    </GroupBody>
    <Footer label="Zwischenablage" launcher />
  </Group>
);

const FontGroup = () => (
  <Group $w={274}>
    <GroupBody $pad="10px 0 0 4px">
      <Tools>
        <ToolRow>
          <Combo $w={86}>
            <select aria-label="Schriftart"><option>Calibri (Textkörper)</option></select>
            <Down />
          </Combo>
          <Combo $w={62}>
            <select aria-label="Schriftgrad"><option>11</option></select>
            <Down />
          </Combo>
          <Tool $w={24} aria-label="Schrift vergrößern">
            <Letter $size={15}>A</Letter>
            <Svg w={5} h={16}><path d="M0 4h5L2.500 1z" fill="#3768bb" /></Svg>
          </Tool>
          <Tool $w={22} aria-label="Schrift verkleinern">
            <Letter $size={11}>A</Letter>
            <Svg w={5} h={16}><path d="M0 1h5L2.500 4z" fill="#3768bb" /></Svg>
          </Tool>
          <Separator $w={8} />
          <Tool $w={24} aria-label="Groß-/Kleinschreibung"><Letter>Aa</Letter></Tool>
          <DropTool label="Schreibweise" />
          <Separator $w={8} />
          <Tool $w={26} aria-label="Formatierung löschen"><ClearIcon /></Tool>
        </ToolRow>
        <ToolRow>
          <Tool $w={22} aria-label="Fett"><Letter>F</Letter></Tool>
          <Tool $w={24} aria-label="Kursiv"><Letter $italic>K</Letter></Tool>
          <Tool $w={24} aria-label="Unterstrichen"><Letter $line="underline">U</Letter></Tool>
          <DropTool w={12} label="Unterstreichung" />
          <Tool $w={24} aria-label="Durchgestrichen"><Letter $size={11} $line="line-through">abc</Letter></Tool>
          <Tool $w={24} aria-label="Tiefgestellt"><Letter>x<sub>2</sub></Letter></Tool>
          <Tool $w={22} aria-label="Hochgestellt"><Letter>x<sup>2</sup></Letter></Tool>
          <Separator $w={8} />
          <Tool $w={22} aria-label="Texteffekte"><GlowLetterIcon /></Tool>
          <DropTool label="Texteffekte wählen" />
          <Tool $w={26} aria-label="Texthervorhebung">
            <MarkerBox>
              <span>ab</span>
              <Svg w={8} h={12}><path d="M1 10l4-8 2 1-3 8z" fill="#dfe8f6" stroke="#45629a" /></Svg>
            </MarkerBox>
          </Tool>
          <DropTool label="Hervorhebungsfarbe" />
          <Tool $w={26} aria-label="Schriftfarbe"><FontColor>A</FontColor></Tool>
          <DropTool label="Schriftfarbe wählen" />
        </ToolRow>
      </Tools>
    </GroupBody>
    <Footer label="Schriftart" launcher />
  </Group>
);

const ParagraphGroup = () => (
  <Group $w={228}>
    <GroupBody $pad="10px 0 0 4px">
      <Tools>
        <ToolRow>
          <Tool $w={24} aria-label="Aufzählungszeichen"><ListIcon kind="bullets" /></Tool>
          <DropTool label="Aufzählung wählen" />
          <Tool $w={26} aria-label="Nummerierung"><ListIcon kind="numbers" /></Tool>
          <DropTool label="Nummerierung wählen" />
          <Tool $w={22} aria-label="Liste mit mehreren Ebenen"><MultiListIcon /></Tool>
          <DropTool label="Ebene wählen" />
          <Separator $w={12} />
          <Tool $w={24} aria-label="Einzug verkleinern"><IndentIcon /></Tool>
          <Tool $w={22} aria-label="Einzug vergrößern"><IndentIcon right /></Tool>
          <Separator $w={6} />
          <Tool $w={26} aria-label="Sortieren"><SortIcon /></Tool>
          <Separator $w={8} />
          <Tool $w={24} aria-label="Absatzmarken"><Letter $size={15}>¶</Letter></Tool>
        </ToolRow>
        <ToolRow>
          <Tool $w={24} $active aria-label="Linksbündig"><AlignIcon kind="left" /></Tool>
          <Tool $w={22} aria-label="Zentriert"><AlignIcon kind="center" /></Tool>
          <Tool $w={24} aria-label="Rechtsbündig"><AlignIcon kind="right" /></Tool>
          <Tool $w={22} aria-label="Blocksatz"><AlignIcon kind="justify" /></Tool>
          <Separator $w={8} />
          <Tool $w={24} aria-label="Zeilenabstand"><SpacingIcon /></Tool>
          <DropTool label="Abstand wählen" />
          <Separator $w={12} />
          <Tool $w={22} aria-label="Schattierung"><BucketIcon /></Tool>
          <DropTool label="Schattierung wählen" />
          <Tool $w={26} aria-label="Rahmen"><BordersIcon /></Tool>
          <DropTool label="Rahmen wählen" />
        </ToolRow>
      </Tools>
    </GroupBody>
    <Footer label="Absatz" launcher />
  </Group>
);

const StylesGroup = () => (
  <Group $grow>
    <GroupBody $pad="5px 0 0 5px">
      <Gallery>
        <GalleryItems>
          {styles.map((s, i) => (
            <StyleCard key={i} $active={s.active}>
              <Sample
                $serif={s.serif}
                $bold={s.bold}
                $italic={s.italic}
                $caps={s.caps}
                $underline={s.underline}
                $size={s.size}
                $leading={s.leading}
                $color={s.color}
              >
                {s.underline ? <span>AaBbCcDd</span> : s.text || "AaBbCcDd"}
              </Sample>
              <StyleName>{s.name}</StyleName>
            </StyleCard>
          ))}
        </GalleryItems>
        <GalleryScroll>
          <button aria-label="Nach oben" disabled>
            <Svg w={5} h={3}><path d="M0 3h5L2.500 0z" fill="#8a8a8a" /></Svg>
          </button>
          <button aria-label="Nach unten"><Down color="#333" /></button>
          <button aria-label="Weitere">
            <Svg w={7} h={7}><path d="M0 .5h7" stroke="#333" /><path d="M1 3h5L3.500 6z" fill="#333" /></Svg>
          </button>
        </GalleryScroll>
      </Gallery>
      <BigButton $w={93}>
        <BigIcon><ChangeStylesIcon /></BigIcon>
        Formatvorlagen
        <span>
          ändern <Svg w={5} h={6}><path d="M0 0h5L2.500 3z" fill="#555" /></Svg>
        </span>
      </BigButton>
    </GroupBody>
    <Footer label="Formatvorlagen" launcher />
  </Group>
);

const EditGroup = () => (
  <Group $w={96}>
    <GroupBody $pad="4px 0 0 7px">
      <Stack>
        <RowButton><BinocularsIcon />Suchen <Down /></RowButton>
        <RowButton>
          <ReplaceBox>ab<span>a<em>c</em></span></ReplaceBox>
          Ersetzen
        </RowButton>
        <RowButton><PointerIcon />Markieren <Down /></RowButton>
      </Stack>
    </GroupBody>
    <Footer label="Bearbeiten" />
  </Group>
);

const RibbonEnd = styled.div`
  width: 14px;
`;

const VerticalScroll = () => (
  <ScrollColumn>
    <SplitBar />
    <ScrollButton $h={20} $line aria-label="Lineal">
      <RulerIcon />
    </ScrollButton>
    <ScrollButton $h={16} aria-label="Zeile nach oben">
      <Svg w={9} h={5}><path d="M0 5h9L4.500 0z" fill="#1d1d1d" /></Svg>
    </ScrollButton>
    <ScrollTrack>
      <ScrollThumb>
        <Svg w={8} h={9}><path d="M0 .5h8M0 2.500h8M0 4.500h8M0 6.500h8M0 8.500h8" stroke="#999" /></Svg>
      </ScrollThumb>
    </ScrollTrack>
    <ScrollButton $h={17} $line aria-label="Zeile nach unten">
      <Svg w={9} h={5}><path d="M0 0h9L4.500 5z" fill="#1d1d1d" /></Svg>
    </ScrollButton>
    <ScrollButton $h={17} aria-label="Vorherige Seite"><DoubleArrow /></ScrollButton>
    <ScrollButton $h={17} aria-label="Browseobjekt">
      <Svg w={8} h={8}><circle cx="4" cy="4" r="3" fill="#999" stroke="#222" /></Svg>
    </ScrollButton>
    <ScrollButton $h={18} aria-label="Nächste Seite"><DoubleArrow down /></ScrollButton>
  </ScrollColumn>
);

const Status = () => (
  <StatusBar>
    <StatusItem>Seite: 1 von 1</StatusItem>
    <StatusItem>Wörter: 0</StatusItem>
    <StatusItem>Deutsch (Deutschland)</StatusItem>
    <StatusTools>
      <ViewButton $active aria-label="Seitenlayout"><PageIcon /></ViewButton>
      <ViewButton aria-label="Vollbild-Lesemodus"><BookIcon /></ViewButton>
      <ViewButton aria-label="Weblayout"><WebIcon /></ViewButton>
      <ViewButton aria-label="Gliederung"><OutlineIcon /></ViewButton>
      <ViewButton aria-label="Entwurf"><DraftIcon /></ViewButton>
      <ZoomValue>120 %</ZoomValue>
      <RoundButton aria-label="Verkleinern"><RoundIcon /></RoundButton>
      <ZoomSlider type="range" min="0" max="100" defaultValue="53" aria-label="Zoom" />
      <RoundButton aria-label="Vergrößern"><RoundIcon plus /></RoundButton>
    </StatusTools>
  </StatusBar>
);

const Tasks = () => (
  <TaskBar>
    <StartButton aria-label="Start"><StartOrb /></StartButton>
    {tasks.map((t) => (
      <TaskSlot key={t.name}>
        <TaskButton $open={t.open} $stacked={t.stacked} $current={t.current} $w={t.w} aria-label={t.name}>
          {t.icon}
        </TaskButton>
      </TaskSlot>
    ))}
    <Tray>
      <Language>DE</Language>
      <TrayButton aria-label="Ausgeblendete Symbole">
        <Svg w={7} h={4}><path d="M0 4h7L3.500 0z" fill="#eee" /></Svg>
      </TrayButton>
      <TrayButton aria-label="Wartungscenter">
        <Svg w={15} h={14}>
          <path d="M1 0v14" stroke="#fff" />
          <path d="M3 1h6v2h5l-2 3 1 2H8V7H3z" fill="#fff" />
        </Svg>
      </TrayButton>
      <TrayButton aria-label="Netzwerk">
        <Svg w={15} h={14}>
          <path d="M5 2.500h9v7H5M5 12.500h8M9.500 10v2M2.500 5v8H6" stroke="#fff" strokeWidth="1.500" />
          <path d="M1 0v3h3V0M1 4h3" stroke="#fff" />
        </Svg>
      </TrayButton>
      <TrayButton aria-label="Lautstärke">
        <Svg w={13} h={14}>
          <path d="M0 4h3l4-4v14l-4-4H0z" fill="#fff" />
          <path d="M9.500 4q2 3 0 6" stroke="#ccc" />
        </Svg>
      </TrayButton>
      <Clock>
        17:50
        <br />
        20.09.2014
      </Clock>
      <ShowDesktop aria-label="Desktop anzeigen" />
    </Tray>
  </TaskBar>
);

const App = () => {
  return (
    <Window>
      <GlobalStyle />
      <TitleBar />
      <Ribbon>
        <ClipboardGroup />
        <FontGroup />
        <ParagraphGroup />
        <StylesGroup />
        <EditGroup />
        <RibbonEnd />
      </Ribbon>
      <Workspace>
        <Canvas>
          <Page>
            <Caret />
          </Page>
        </Canvas>
        <VerticalScroll />
      </Workspace>
      <Status />
      <Tasks />
    </Window>
  );
};

export default App;
